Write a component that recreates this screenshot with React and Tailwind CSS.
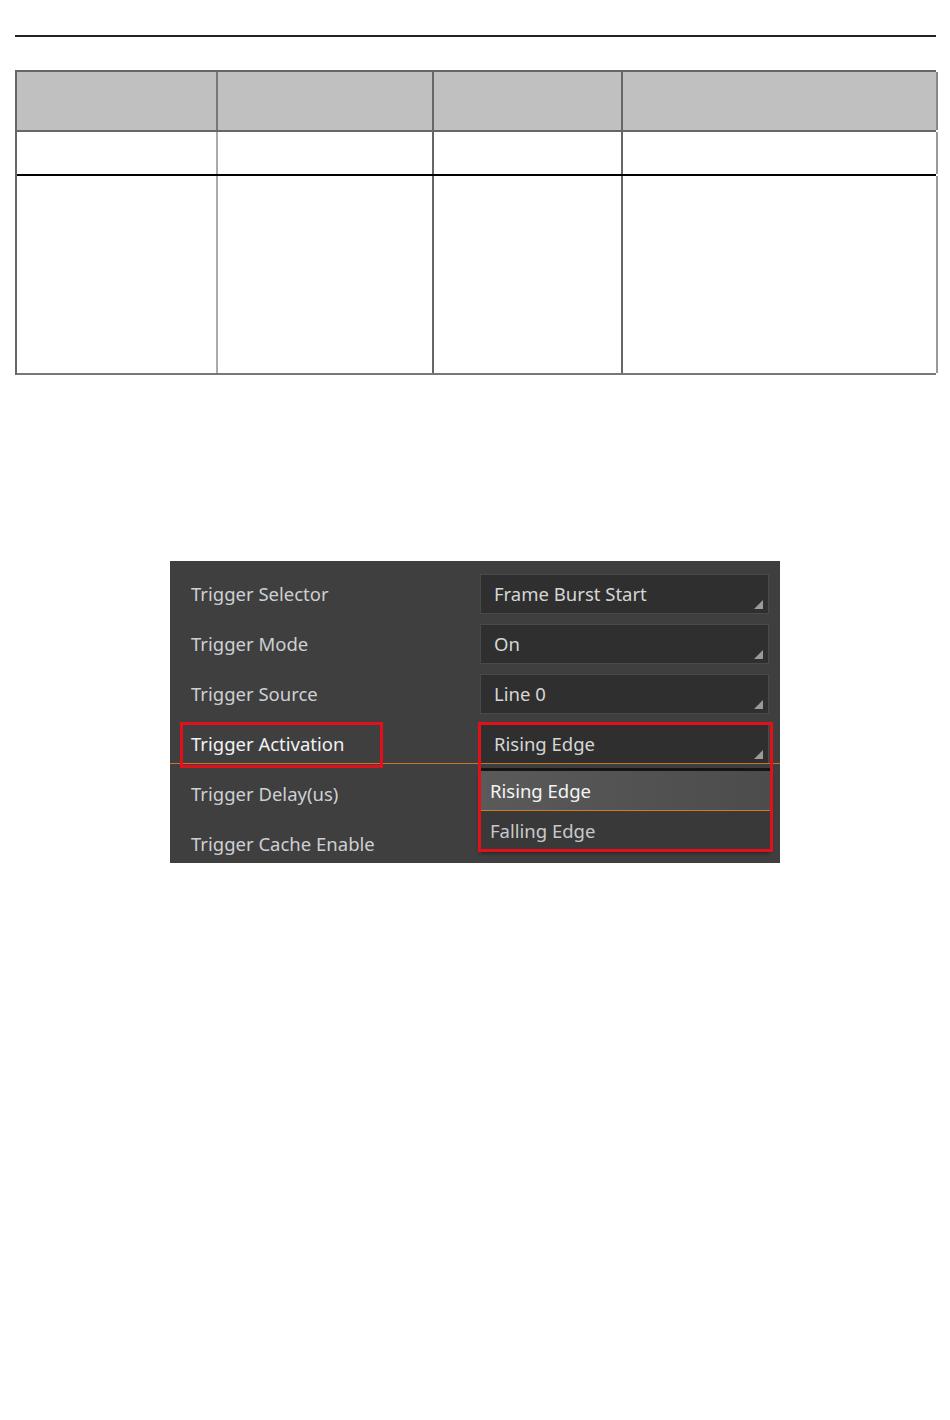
const rows = [
  { label: "Trigger Selector", value: "Frame Burst Start" },
  { label: "Trigger Mode", value: "On" },
  { label: "Trigger Source", value: "Line 0" },
  { label: "Trigger Activation", value: "Rising Edge", active: true },
  { label: "Trigger Delay(us)" },
  { label: "Trigger Cache Enable" },
];

function Corner() {
  return (
    <svg width="9" height="9" viewBox="0 0 9 9" className="absolute right-[5px] bottom-[4px]">
      <polygon points="9,0 9,9 0,9" fill="#9a9a9a" />
    </svg>
  );
}

function Table() {
  const cols = "grid grid-cols-[201px_216px_189px_315px]";
  return (
    <div className="ml-[15px] mt-[33px] w-[921px] border-l-2 border-t-2 border-[#666]">
      <div className={`${cols} h-[60px] bg-[#c0c0c0] border-b-2 border-[#666]`}>
        <div className="border-r-2 border-[#777]" />
        <div className="border-r-2 border-[#666]" />
        <div className="border-r-2 border-[#666]" />
        <div className="border-r-2 border-[#888]" />
      </div>
      <div className={`${cols} h-[44px] border-b-2 border-black`}>
        <div className="border-r-2 border-[#aaa]" />
        <div className="border-r-2 border-[#666]" />
        <div className="border-r-2 border-[#666]" />
        <div className="border-r-2 border-[#999]" />
      </div>
      <div className={`${cols} h-[199px] border-b-2 border-[#777]`}>
        <div className="border-r-2 border-[#aaa]" />
        <div className="border-r-2 border-[#666]" />
        <div className="border-r-2 border-[#666]" />
        <div className="border-r-2 border-[#999]" />
      </div>
    </div>
  );
}

function Panel() {
  return (
    <div
      className="relative ml-[170px] mt-[186px] w-[610px] h-[302px] bg-[#3f3f3f] text-[18.5px]"
      style={{ fontFamily: "'Noto Sans', 'Open Sans', sans-serif" }}
    >
      <div className="flex flex-col gap-[10px] pt-[13px]">
        {rows.map((r) => (
          <div key={r.label} className="flex items-center h-[40px]">
            <div
              className={`w-[310px] pl-[21px] ${r.active ? "text-[#f2f2f2]" : "text-[#cdd0d3]"}`}
            >
              {r.label}
            </div>
            {r.value && (
              <div className="relative w-[289px] h-[40px] bg-[#2f2f2f] border border-[#4a4a4a] flex items-center pl-[13px] text-[#d6d6d6]">
                {r.value}
                <Corner />
              </div>
            )}
          </div>
        ))}
      </div>

      <div className="absolute left-0 right-0 top-[202px] h-px bg-[#c8742a]" />

      <div className="absolute left-[310px] top-[207px] w-[290px] h-[82px] shadow-[0_3px_4px_rgba(0,0,0,0.5)] border-t-[3px] border-[#151515]">
        <div className="h-[40px] flex items-center pl-[10px] bg-gradient-to-r from-[#5a5a5a] to-[#4c4c4c] text-[#f4f4f4] border-b border-[#d07a2a]">
          Rising Edge
        </div>
        <div className="h-[39px] flex items-center pl-[10px] bg-[#393939] text-[#c9c9c9]">
          Falling Edge
        </div>
      </div>

      <div className="absolute left-[10px] top-[161px] w-[203px] h-[46px] border-[3px] border-[#e3101a]" />
      <div className="absolute left-[308px] top-[161px] w-[295px] h-[130px] border-[3px] border-[#e3101a]" />
    </div>
  );
}

export default function App() {
  return (
    <div className="w-[950px] h-[1420px] bg-white overflow-hidden pt-px">
      <div className="ml-[15px] mt-[34px] w-[921px] h-[2px] bg-[#222]" />
      <Table />
      <Panel />
    </div>
  );
}
